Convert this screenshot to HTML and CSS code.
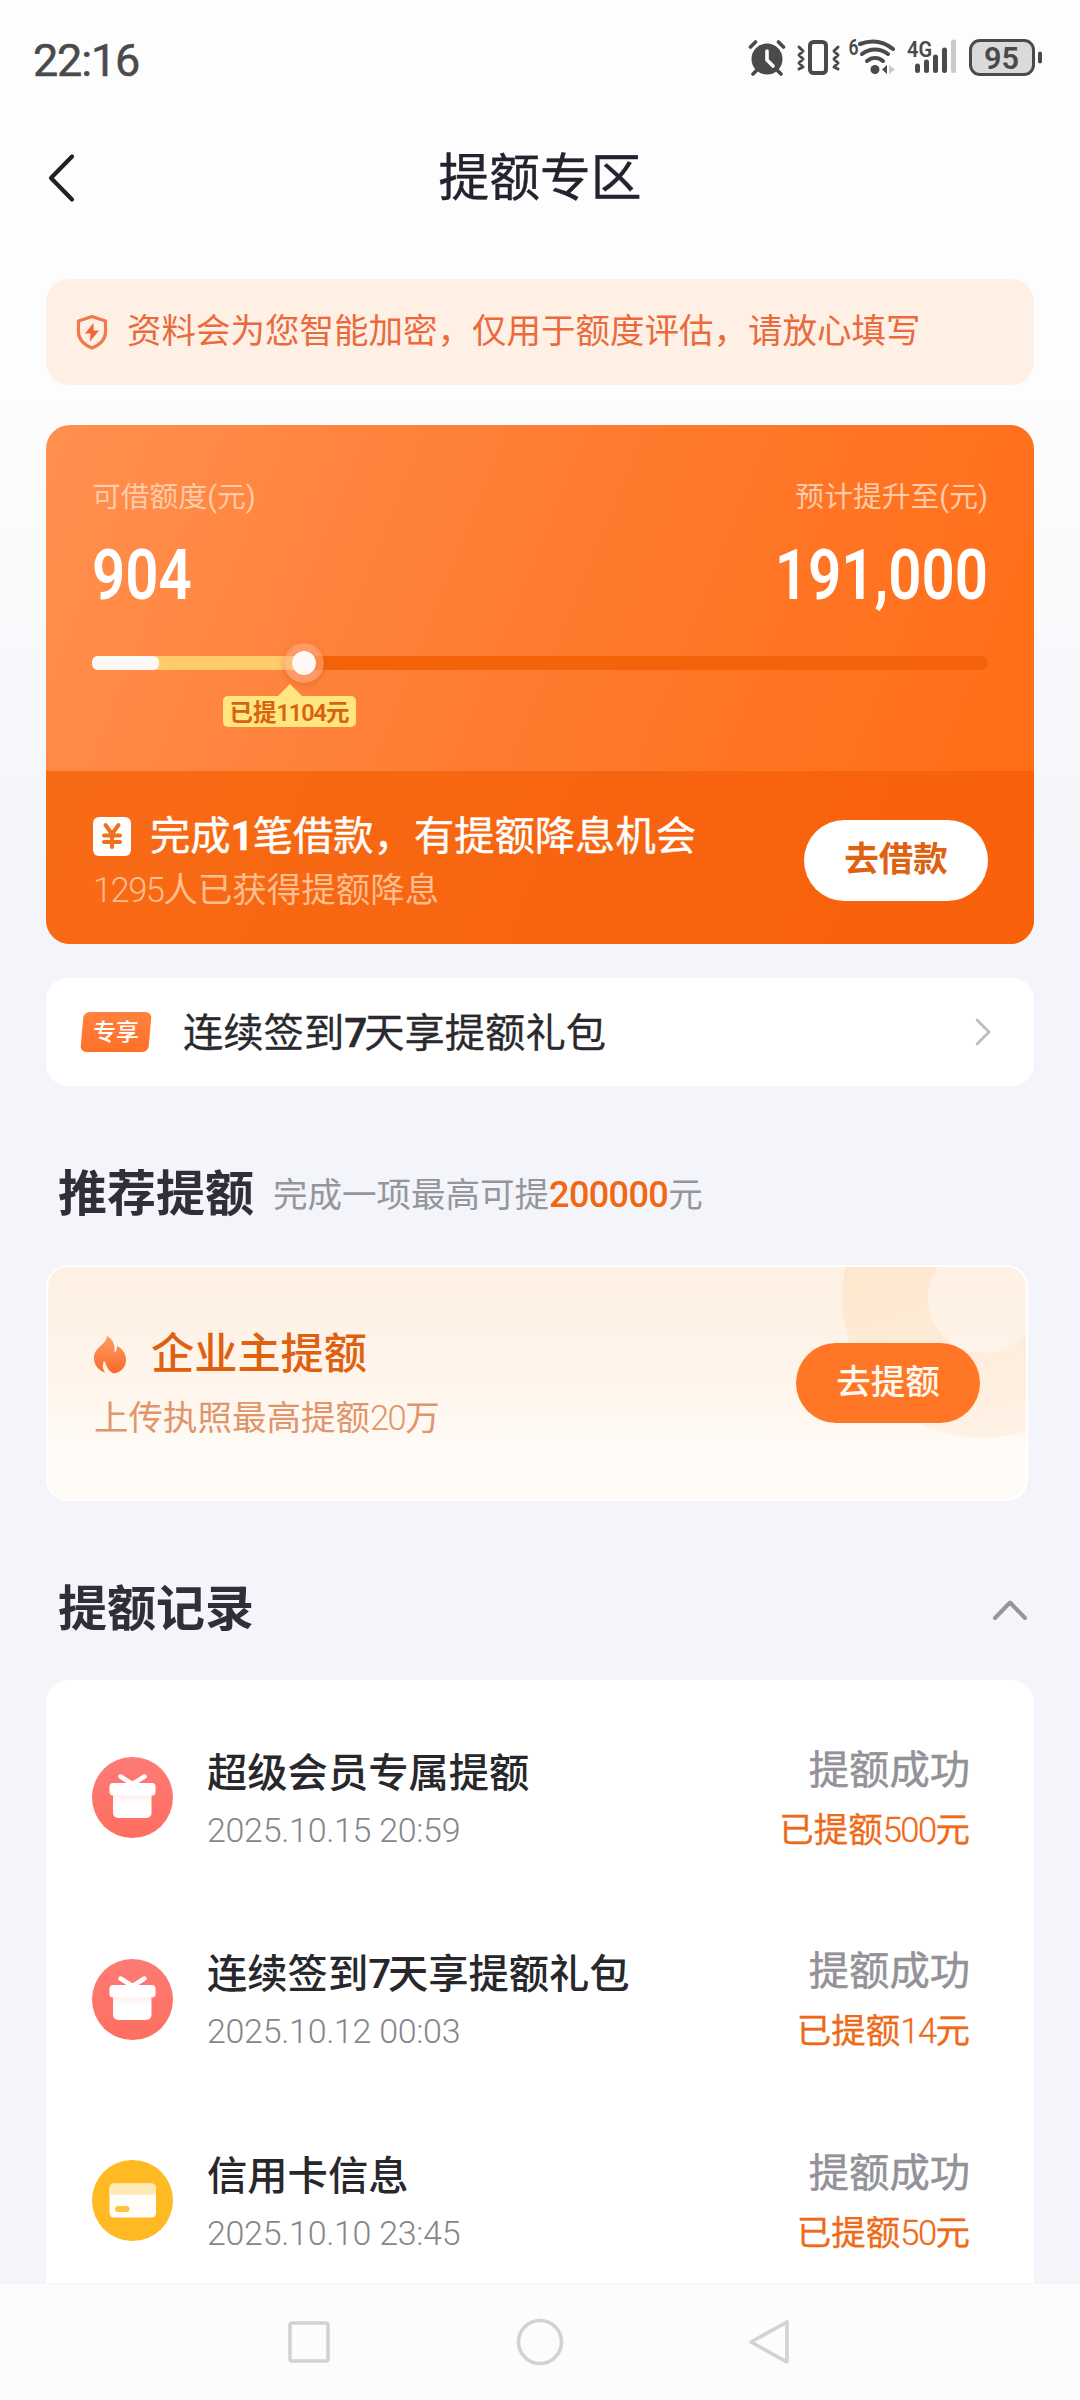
FILE: index.html
```html
<!DOCTYPE html>
<html lang="zh-CN">
<head>
<meta charset="utf-8">
<title>提额专区</title>
<link rel="stylesheet" href="styles.css">
</head>
<body>
<div class="screen">
  <header class="status">
    <span class="clock">22:16</span>
    <svg class="status-icons" width="300" height="44" viewBox="0 0 300 44" fill="none" stroke="#4a4a4a" stroke-linecap="round" stroke-linejoin="round">
      <g transform="translate(1 0)">
        <circle cx="19" cy="23" r="15.5" fill="#4a4a4a" stroke="none"/>
        <path d="M2.500 11l5-5M35.500 11l-5-5M9 34l-4 4M29 34l4 4" stroke-width="3.6"/>
        <path d="M19 15v9l6 6" stroke="#fff" stroke-width="3.6"/>
      </g>
      <g transform="translate(1 0)">
        <rect x="62" y="6" width="16" height="31" rx="3.5" stroke-width="4"/>
        <path d="M51 11l4 4-4 4 4 4-4 4 4 4-4 2M90 11l-4 4 4 4-4 4 4 4-4 4 4 2" stroke-width="3"/>
      </g>
      <g>
        <path d="M113 8c11-4 23-3 33 5" stroke-width="4"/>
        <path d="M115 18c8-6 18-6 26 0" stroke-width="4"/>
        <path d="M120 25c5-4 11-4 16 0" stroke-width="4"/>
        <circle cx="128" cy="33.500" r="4.500" fill="#4a4a4a" stroke="none"/>
        <path d="M140 29v9l-5-4.500z" fill="#4a4a4a" stroke="none"/>
        <path d="M142 29v9l6-4.500z" fill="#c9c9c9" stroke="none"/>
      </g>
      <g stroke-width="5">
        <path d="M170.500 30v4.500M179.500 26v8.500M188.500 21v13.500M197.500 14v20.500"/>
        <path d="M206.500 6v28.500" stroke="#c9c9c9"/>
      </g>
      <rect x="223.500" y="4.500" width="63" height="34" rx="9.500" fill="#dadada" stroke-width="3"/>
      <path d="M293 17.500v8" stroke-width="4"/>
      <g class="status-text" fill="#4a4a4a" stroke="none">
        <text x="101.500" y="19" font-size="22" textLength="10" lengthAdjust="spacingAndGlyphs">6</text>
        <text x="160" y="20.500" font-size="22" textLength="25" lengthAdjust="spacingAndGlyphs">4G</text>
        <text x="237" y="33" font-size="32" textLength="35" lengthAdjust="spacingAndGlyphs">95</text>
      </g>
    </svg>
  </header>

  <nav class="topbar">
    <svg class="back" width="30" height="52" viewBox="0 0 30 52" fill="none" stroke="#222" stroke-width="4.200" stroke-linecap="round" stroke-linejoin="round"><path d="M25 3.500L4 25l21 21.500"/></svg>
    <h1>提额专区</h1>
  </nav>

  <main>
    <section class="notice">
      <svg width="34" height="36" viewBox="0 0 34 36" fill="none"><path d="M17 2.500L30.500 7v11c0 8-5 12.500-13.500 16C8.500 30.500 3.500 26 3.500 18V7z" stroke="#f07a4c" stroke-width="3.200" stroke-linejoin="round"/><path d="M18.500 9l-8.500 10.500h5.500l-.5 8 9-11h-5.500z" fill="#f0653a"/></svg>
      <p>资料会为您智能加密，仅用于额度评估，请放心填写</p>
    </section>

    <section class="quota">
      <div class="quota-top">
        <div class="labels"><span>可借额度(元)</span><span>预计提升至(元)</span></div>
        <div class="amounts"><span class="amount">904</span><span class="amount end">191,000</span></div>
        <div class="track">
          <div class="gained"></div>
          <div class="base"></div>
          <div class="knob"></div>
          <div class="tip">已提<span class="num">1104</span>元</div>
        </div>
      </div>
      <div class="quota-bottom">
        <div class="offer">
          <div class="offer-title">
            <svg width="38" height="39" viewBox="0 0 38 39"><rect width="38" height="39" rx="6" fill="#fff"/><path d="M12.500 8l6.500 9 6.500-9M11 18.500h16M11 25h16M19 17v13" fill="none" stroke="#f2701f" stroke-width="4" stroke-linecap="round"/></svg>
            <span>完成<b>1</b>笔借款，有提额降息机会</span>
          </div>
          <div class="offer-sub"><span class="num">1295</span>人已获得提额降息</div>
        </div>
        <a class="pill white">去借款</a>
      </div>
    </section>

    <section class="checkin">
      <span class="tag"><span>专享</span></span>
      <span class="checkin-title">连续签到<b>7</b>天享提额礼包</span>
      <svg width="20" height="32" viewBox="0 0 20 32" fill="none" stroke="#bdbdc1" stroke-width="2.800" stroke-linecap="round" stroke-linejoin="round"><path d="M4 4L16 16 4 28"/></svg>
    </section>

    <div class="heading recommend">
      <h2>推荐提额</h2>
      <p>完成一项最高可提<b>200000</b>元</p>
    </div>

    <section class="business">
      <svg class="rings" width="190" height="180" viewBox="0 0 190 180"><defs><linearGradient id="ring" x1="0" y1="0" x2=".3" y2="1"><stop offset=".4" stop-color="#fde7ce"/><stop offset="1" stop-color="#fff1e3"/></linearGradient></defs><path fill="url(#ring)" fill-rule="evenodd" d="M0 31a140 140 0 1 0 280 0a140 140 0 1 0-280 0zM86 31a55 55 0 1 0 110 0a55 55 0 1 0-110 0z"/></svg>
      <div class="business-text">
        <div class="business-title">
          <svg width="32" height="38" viewBox="0 0 32 38"><defs><linearGradient id="fire" x1="0" y1="0" x2="0" y2="1"><stop offset="0" stop-color="#ff9c66"/><stop offset="1" stop-color="#f96a28"/></linearGradient></defs><path fill="url(#fire)" d="M13 0c7 4 8 10 7.500 17 2-2 2.500-4 2.500-7 6 3 9 8 9 14 0 7-5 12.500-12.500 13.500-4-2-6.500-5-7.500-9-.5-1.500-1-2.500-2-3.500-1.500 3.500-2 7 1 11.500C4 34 0 29 0 22 0 11 12 9.500 13 0z"/></svg>
          <span>企业主提额</span>
        </div>
        <div class="business-sub">上传执照最高提额<span class="num">20</span>万</div>
      </div>
      <a class="pill orange">去提额</a>
    </section>

    <div class="heading records-head">
      <h2>提额记录</h2>
      <svg width="36" height="24" viewBox="0 0 36 24" fill="none" stroke="#949698" stroke-width="4" stroke-linecap="round" stroke-linejoin="round"><path d="M3 20L18 4.500 33 20"/></svg>
    </div>

    <section class="records">
      <article class="record">
        <svg class="gift" width="81" height="81" viewBox="0 0 81 81"><use href="#gift"/></svg>
        <div class="what"><h3>超级会员专属提额</h3><time>2025.10.15 20:59</time></div>
        <div class="result"><span>提额成功</span><em>已提额<span class="num">500</span>元</em></div>
      </article>
      <article class="record">
        <svg class="gift" width="81" height="81" viewBox="0 0 81 81"><use href="#gift"/></svg>
        <div class="what"><h3>连续签到<span class="num">7</span>天享提额礼包</h3><time>2025.10.12 00:03</time></div>
        <div class="result"><span>提额成功</span><em>已提额<span class="num">14</span>元</em></div>
      </article>
      <article class="record">
        <svg width="81" height="81" viewBox="0 0 81 81"><circle cx="40.500" cy="40.500" r="40.500" fill="#ffb922"/><rect x="17.500" y="23.500" width="46.500" height="34" rx="4.500" fill="#fffdf8"/><path d="M17.500 34.500V28a4.500 4.500 0 0 1 4.500-4.500h37.500a4.500 4.500 0 0 1 4.500 4.500v6.500z" fill="#ffe8b3"/><rect x="23" y="46" width="14.500" height="6" rx="3" fill="#ffc23a"/></svg>
        <div class="what"><h3>信用卡信息</h3><time>2025.10.10 23:45</time></div>
        <div class="result"><span>提额成功</span><em>已提额<span class="num">50</span>元</em></div>
      </article>
    </section>
  </main>

  <footer class="sysnav">
    <svg width="50" height="50" viewBox="0 0 50 50"><rect x="6" y="6" width="38" height="38" rx="2"/></svg>
    <svg width="50" height="50" viewBox="0 0 50 50"><circle cx="25" cy="25" r="21.500"/></svg>
    <svg width="50" height="50" viewBox="0 0 50 50"><path d="M41 5v40L5 25z" stroke-linejoin="round"/></svg>
  </footer>
</div>

<svg class="defs" width="0" height="0">
  <defs>
    <linearGradient id="box" x1="0" y1="0" x2="0" y2="1"><stop offset="0" stop-color="#ffe9e6"/><stop offset=".4" stop-color="#fff"/></linearGradient>
    <linearGradient id="coral" x1="0" y1="0" x2="0" y2="1"><stop offset="0" stop-color="#fd7b76"/><stop offset="1" stop-color="#ff6e60"/></linearGradient>
    <g id="gift">
      <circle cx="40.500" cy="40.500" r="40.500" fill="url(#coral)"/>
      <path d="M28.500 19.500L40.500 27l12-7.500" fill="none" stroke="#fff" stroke-width="4.500" stroke-linecap="round" stroke-linejoin="round"/>
      <path d="M21 36h38.500v20a5 5 0 0 1-5 5H26a5 5 0 0 1-5-5z" fill="url(#box)"/>
      <rect x="17.500" y="26" width="46" height="12.500" rx="3.500" fill="#fff"/>
    </g>
  </defs>
</svg>
</body>
</html>
```
FILE: styles.css
```css
* { box-sizing: border-box; margin: 0; padding: 0; }
body {
  width: 1080px;
  height: 2400px;
  overflow: hidden;
  font-family: Roboto, "Noto Sans CJK SC", sans-serif;
  color: #2a2a2e;
}
svg { display: block; flex: none; }
.defs { position: absolute; }
.screen {
  display: flex;
  flex-direction: column;
  height: 2400px;
  background: linear-gradient(#fdfdfd 400px, #f3f5fa 900px);
}
.num { letter-spacing: -0.045em; }

.status {
  display: flex;
  justify-content: space-between;
  height: 120px;
  padding: 36px 33px 0 33px;
}
.clock {
  height: 46px;
  font-size: 45px;
  line-height: 49px;
  letter-spacing: -1.2px;
  color: #4a4a4a;
  -webkit-text-stroke: .5px #4a4a4a;
}
.status-icons { font-weight: 600; }

.topbar {
  display: grid;
  grid-template-columns: 200px 1fr 200px;
  align-items: center;
  height: 118px;
}
.back { margin-left: 47px; }
.topbar h1 {
  text-align: center;
  font-size: 50.8px;
  line-height: 60px;
  font-weight: 400;
  color: #23232f;
  -webkit-text-stroke: .4px #23232f;
}

main { flex: 1; padding: 41px 46px 0; }

.notice {
  display: flex;
  align-items: center;
  gap: 18px;
  height: 106px;
  padding-left: 29px;
  border-radius: 23px;
  background: #fef0e5;
}
.notice p { font-size: 34.5px; line-height: 50px; color: #ea6a3c; white-space: nowrap; margin-top: -2px; }

.quota {
  height: 519px;
  margin-top: 40px;
  border-radius: 24px;
  overflow: hidden;
  background: linear-gradient(112deg, #ff904f 0%, #ff7a2e 50%, #ff6c14 100%);
}
.quota-top { height: 346px; padding: 51px 46px 0; }
.labels {
  display: flex;
  justify-content: space-between;
  font-size: 28.8px;
  line-height: 42px;
  color: #ffcba8;
}
.amounts { display: flex; justify-content: space-between; margin-top: 22px; }
.amount {
  font-size: 71px;
  line-height: 70px;
  font-weight: 600;
  color: #fff;
  transform: scaleX(.82);
  transform-origin: left;
}
.amount.end { transform-origin: right; }
.track {
  position: relative;
  height: 14px;
  margin-top: 46px;
  border-radius: 7px;
  background: #f4620a;
}
.gained, .base { position: absolute; left: 0; top: 0; height: 14px; border-radius: 6px; }
.gained { width: 212px; background: #ffcb6b; }
.base { width: 67px; background: #fff9f5; }
.knob {
  position: absolute;
  left: 192px;
  top: -13px;
  width: 40px;
  height: 40px;
  border: 8px solid rgba(255, 180, 140, .5);
  border-radius: 50%;
  background: #fff9f5;
  background-clip: padding-box;
  box-shadow: 0 2px 6px rgba(190, 80, 20, .35);
}
.tip {
  position: absolute;
  left: 131px;
  top: 40px;
  width: 133px;
  height: 31px;
  border-radius: 5px;
  background: #ffe680;
  text-align: center;
  font-size: 23.5px;
  line-height: 34px;
  font-weight: 600;
  color: #d8620e;
}
.tip::before {
  content: "";
  position: absolute;
  left: 55px;
  top: -12px;
  border: 12px solid transparent;
  border-top: 0;
  border-bottom-color: #ffe680;
}
.quota-bottom {
  display: flex;
  align-items: flex-start;
  justify-content: space-between;
  height: 173px;
  padding: 37px 46px 0;
  background: linear-gradient(112deg, #f86b16, #f76510 50%, #f9600a);
}
.offer-title { display: flex; align-items: center; gap: 19px; height: 56px; font-size: 40.3px; line-height: 56px; color: #fff; padding-left: 1px; white-space: nowrap; }
.offer-title span { padding-top: 2px; -webkit-text-stroke: .4px #fff; }
.offer-title b { font-weight: 700; letter-spacing: -1px; }
.offer-sub { padding-left: 1px; margin-top: 1px; font-size: 34.5px; line-height: 50px; color: #ffbd90; }
.offer-sub .num { font-weight: 300; }
.pill {
  width: 184px;
  height: 81px;
  border-radius: 41px;
  font-size: 34.5px;
  line-height: 78px;
  text-align: center;
}
.pill.white { margin-top: 12px; background: #fff; color: #dd6212; font-weight: 700; }
.pill.orange { height: 80px; background: #ff7626; color: #fffaf0; font-weight: 500; }

.checkin {
  display: flex;
  align-items: center;
  height: 108px;
  margin-top: 34px;
  padding: 0 41px 0 36px;
  border-radius: 22px;
  background: #fff;
}
.checkin-title { flex: 1; margin-left: 33px; padding-top: 3px; font-size: 40.3px; line-height: 60px; -webkit-text-stroke: .3px #2a2a2e; }
.checkin-title b { font-weight: 600; letter-spacing: -3px; }
.tag {
  width: 68px;
  height: 40px;
  border-radius: 6px;
  background: linear-gradient(180deg, #ff8140, #ff7027);
  transform: skewX(-5deg);
  text-align: center;
  font-size: 23px;
  line-height: 41px;
  font-weight: 500;
  color: #fff;
}
.tag span { display: inline-block; transform: skewX(5deg); }

.heading { display: flex; align-items: center; padding-left: 12px; }
.heading h2 { font-size: 49px; line-height: 70px; font-weight: 700; color: #2f2f38; }
.recommend { margin-top: 74px; height: 70px; }
.recommend p { margin: -1px 0 0 19px; font-size: 34.5px; line-height: 68px; color: #95969c; }
.recommend b { font-size: 36px; font-weight: 500; letter-spacing: -0.6px; color: #f2670f; }

.business {
  position: relative;
  display: flex;
  justify-content: space-between;
  width: 982px;
  height: 236px;
  margin-top: 35px;
  padding: 58px 46px 0;
  border: 2px solid #fff;
  border-radius: 22px;
  overflow: hidden;
  background: linear-gradient(#fef0e3, #fff5ec 50%, #fffcf8 85%);
}
.rings { position: absolute; right: -6px; top: 0; }
.business-text { position: relative; }
.business-title { display: flex; align-items: center; gap: 25px; height: 60px; font-size: 43.2px; line-height: 60px; font-weight: 500; color: #e0600f; }
.business-sub { margin-top: 8px; font-size: 34.5px; line-height: 50px; color: #e0956a; }
.business-sub .num { font-weight: 300; }
.pill.orange { position: relative; margin-top: 18px; }

.records-head { justify-content: space-between; height: 70px; margin-top: 74px; padding-right: 6px; }

.records {
  height: 603px;
  margin-top: 35px;
  padding-top: 16.8px;
  border-radius: 22px 22px 0 0;
  overflow: hidden;
  background: #fff;
}
.record { display: flex; align-items: center; height: 201.600px; padding: 0 64px 0 46px; }
.what { flex: 1; margin-left: 34px; padding-top: 8px; }
.what h3 { font-size: 40.3px; line-height: 56px; font-weight: 500; color: #28282c; }
.what h3 .num { letter-spacing: -0.08em; }
.what time { display: block; font-size: 34px; line-height: 56px; font-weight: 300; letter-spacing: -0.3px; color: #85868b; }
.result { padding-top: 8px; text-align: right; font-size: 40.3px; line-height: 56px; color: #929298; }
.result > span { display: block; margin-top: -3px; -webkit-text-stroke: .5px #929298; }
.result em { display: block; margin-top: 3px; font-style: normal; font-size: 34.5px; color: #ee6a17; -webkit-text-stroke: .3px #ee6a17; }
.result em .num { font-weight: 300; }

.sysnav {
  display: flex;
  justify-content: center;
  gap: 181px;
  height: 116px;
  padding-top: 33px;
  background: #fcfcfc;
}
.sysnav svg { fill: none; stroke: #d2d2d2; stroke-width: 3.6px; }
```
